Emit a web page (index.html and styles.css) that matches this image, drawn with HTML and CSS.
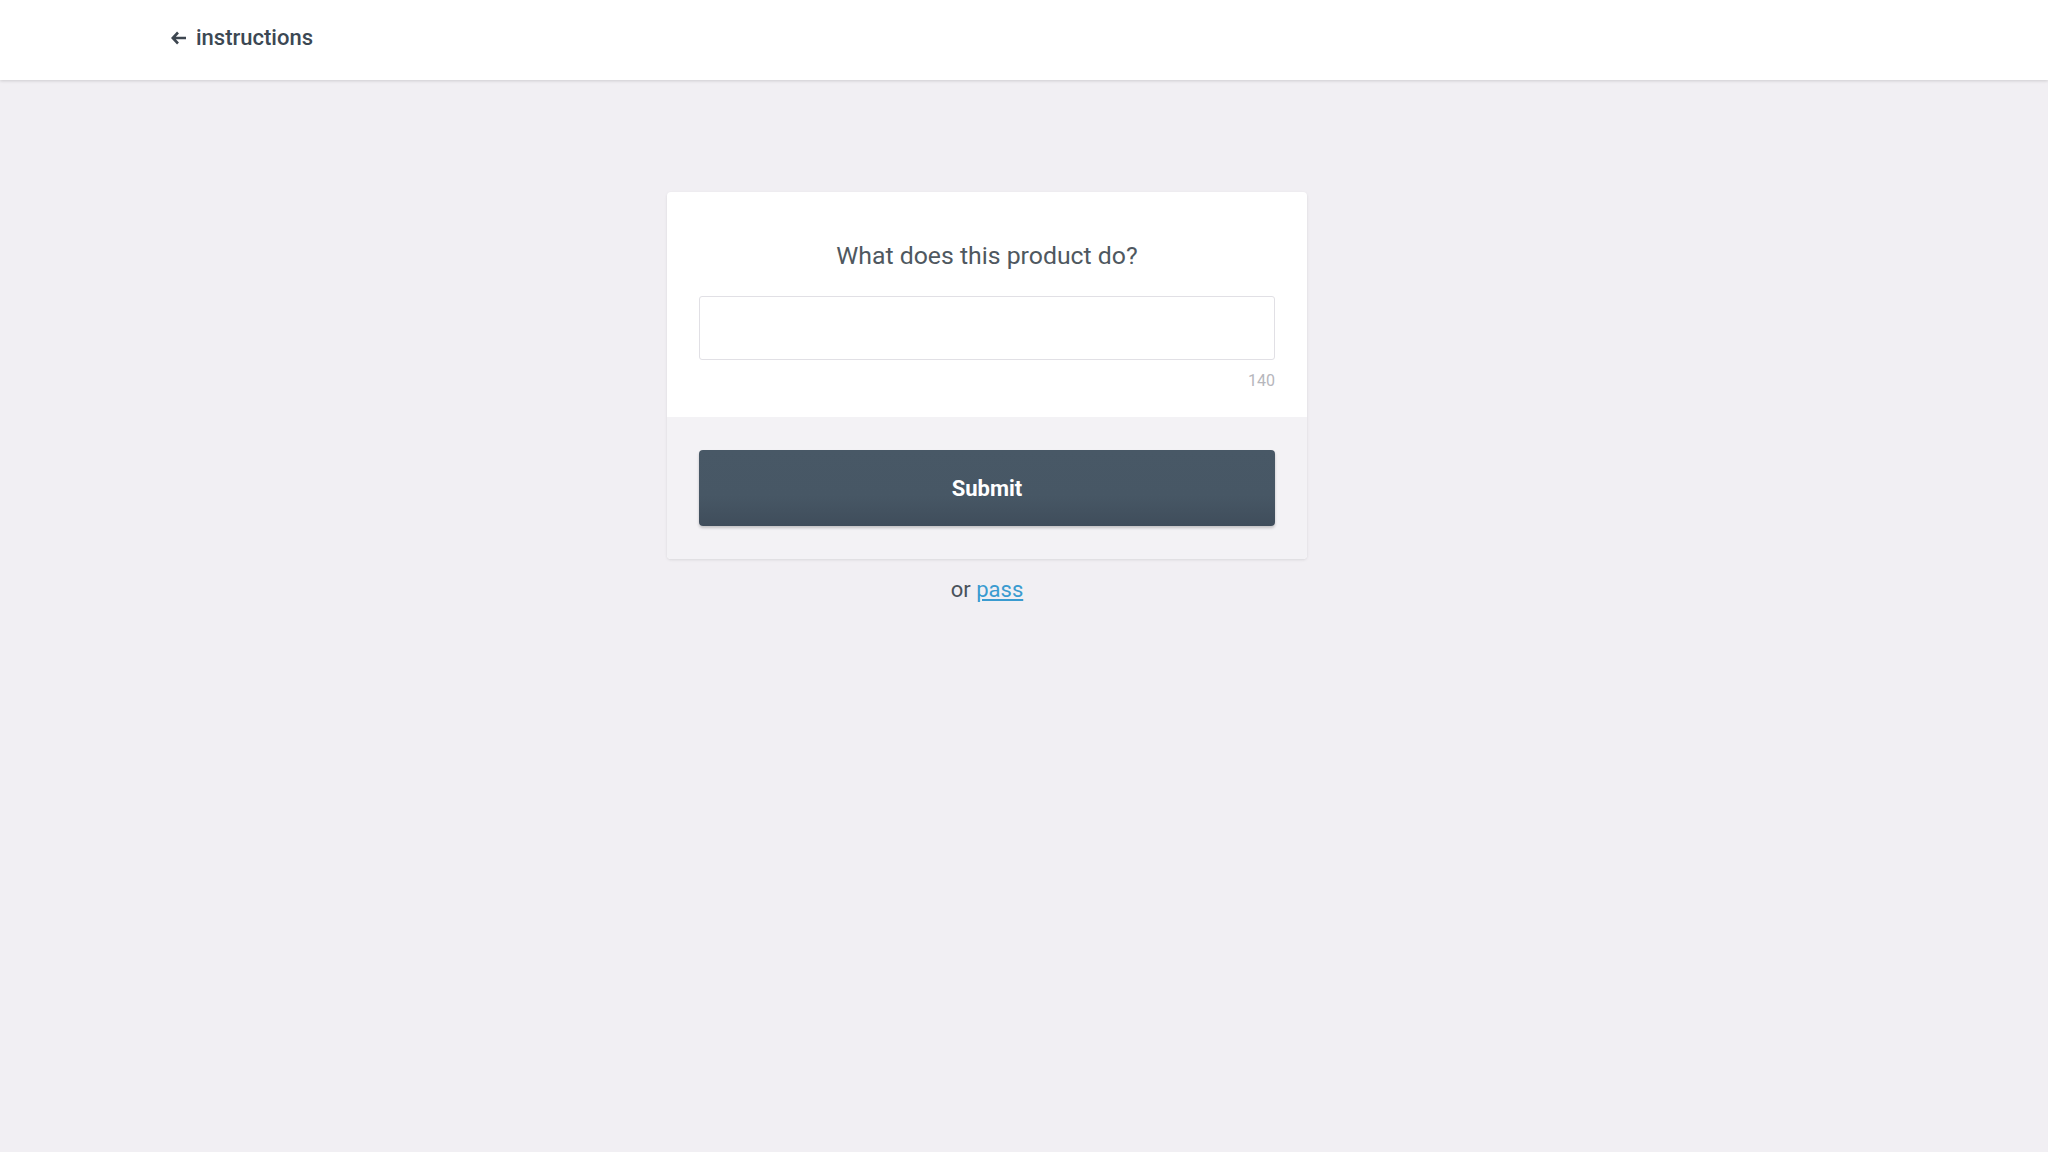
FILE: index.html
```html
<!DOCTYPE html>
<html lang="en">
<head>
    <meta charset="UTF-8">
    <meta name="viewport" content="width=device-width, initial-scale=1.0">
    <title>What does this product do?</title>
    <link rel="stylesheet" href="styles.css">
</head>
<body>
    <header class="top-bar">
        <a href="#" class="back-link">
            <svg class="back-arrow" width="16" height="14" viewBox="0 0 16 14">
                <path d="M7 1.5 L1.8 7 L7 12.5 M2 7 H15" fill="none" stroke="#3d4650" stroke-width="2.6"/>
            </svg>
            instructions
        </a>
    </header>

    <main class="page">
        <div class="question-card">
            <div class="question-body">
                <h2 class="question-title">What does this product do?</h2>
                <input type="text" class="answer-input" maxlength="140">
                <div class="char-count">140</div>
            </div>
            <div class="question-footer">
                <button class="submit-btn">Submit</button>
            </div>
        </div>
        <p class="pass-line">or <a href="#">pass</a></p>
    </main>
</body>
</html>
```

FILE: styles.css
```css
body {
    font-family: Roboto, "Noto Sans", Arial, sans-serif;
    margin: 0;
    padding: 0;
    background-color: #f1eff3;
    color: #3d4650;
}

.top-bar {
    background-color: #fff;
    height: 80px;
    box-shadow: 0 1px 3px rgba(0, 0, 0, 0.15);
    display: flex;
    align-items: center;
    padding-left: 171px;
}

.back-link {
    display: flex;
    align-items: center;
    gap: 9px;
    text-decoration: none;
    color: #3c4853;
    font-size: 22px;
    font-weight: 500;
    margin-top: -6px;
}

.back-arrow {
    margin-top: 2px;
}

.page {
    padding-top: 112px;
    padding-left: 667px;
    width: 640px;
}

.question-card {
    width: 640px;
    background-color: #fff;
    border-radius: 4px;
    box-shadow: 0 1px 3px rgba(0, 0, 0, 0.1);
    overflow: hidden;
}

.question-body {
    padding: 49px 32px 27px;
}

.question-title {
    margin: 0 0 26px;
    text-align: center;
    font-size: 24.8px;
    font-weight: 400;
    color: #4f5860;
}

.answer-input {
    display: block;
    width: 100%;
    box-sizing: border-box;
    height: 64px;
    border: 1px solid #e1e0e5;
    border-radius: 3px;
    background: #fff;
    font-size: 20px;
    padding: 0 14px;
    font-family: inherit;
}

.char-count {
    text-align: right;
    font-size: 16px;
    color: #b6b6bc;
    margin-top: 11px;
}

.question-footer {
    background-color: #f3f2f5;
    padding: 33px 32px 33px;
}

.submit-btn {
    display: block;
    width: 100%;
    height: 76px;
    border: none;
    border-radius: 4px;
    background: linear-gradient(#485866 0%, #475765 60%, #3f4d5b 100%);
    box-shadow: 0 2px 3px rgba(0, 0, 0, 0.2);
    color: #fff;
    font-family: inherit;
    font-size: 22px;
    font-weight: 700;
    cursor: pointer;
}

.pass-line {
    text-align: center;
    font-size: 22px;
    color: #4a525b;
    margin: 18px 0 0;
}

.pass-line a {
    color: #3a9bd0;
}
```
